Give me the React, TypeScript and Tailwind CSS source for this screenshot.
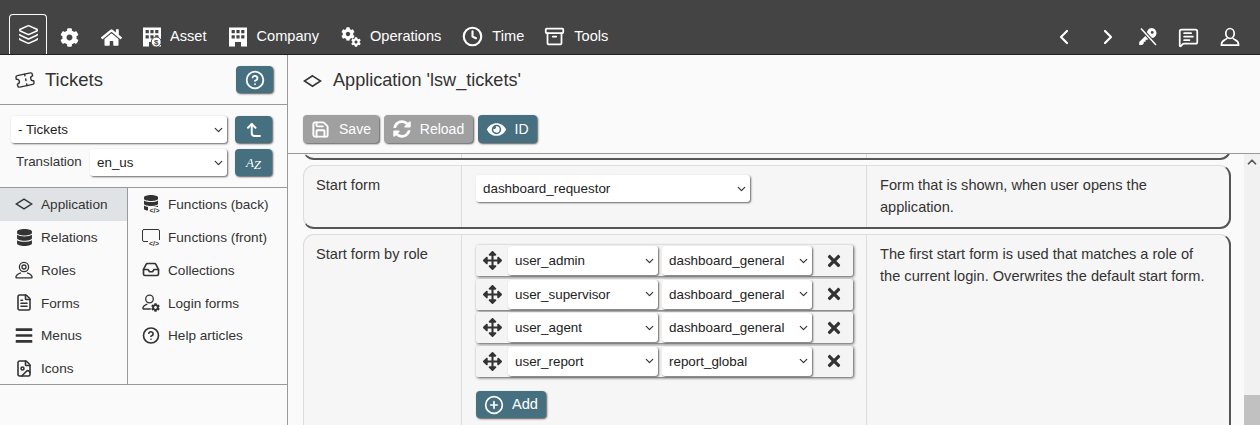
import type { ReactNode } from "react";
import {
  Archive,
  ChevronDown,
  ChevronLeft,
  ChevronRight,
  ChevronUp,
  CircleHelp,
  Clock,
  CornerLeftUp,
  FileImage,
  FileText,
  Inbox,
  Layers,
  MessageSquareText,
  CirclePlus,
  Save,
  Ticket,
} from "lucide-react";
import { FaArrowsAlt, FaBars, FaCog, FaDatabase, FaEye, FaHome, FaSyncAlt, FaTimes } from "react-icons/fa";

function Diamond({ className }: { className?: string }) {
  return (
    <svg viewBox="0 0 20 14" className={className} fill="none" stroke="currentColor" strokeWidth="1.6">
      <path d="M10 1.5 18.5 7 10 12.5 1.5 7Z" />
    </svg>
  );
}

function Building({ badge }: { badge?: boolean }) {
  return (
    <svg viewBox="0 0 18 20" className="h-[20px] w-[18px]" fill="currentColor">
      <path
        fillRule="evenodd"
        d="M0 .5h18v19h-6v-4.5H6v4.5H0ZM2.6 3v3.2h3.2V3Zm4.8 0v3.2h3.2V3Zm4.8 0v3.2h3.2V3ZM2.6 8.2v3.2h3.2V8.2Zm4.8 0v3.2h3.2V8.2Zm4.8 0v3.2h3.2V8.2Z"
      />
      {badge && (
        <>
          <circle cx="13.2" cy="15" r="5" stroke="#444" strokeWidth="1" />
          <text x="13.2" y="18" fontSize="8" textAnchor="middle" fill="#444" fontWeight="700">
            $
          </text>
        </>
      )}
    </svg>
  );
}

function TwoGears() {
  return (
    <span className="relative block h-[20px] w-[20px]">
      <FaCog size={14} className="absolute left-0 top-0" />
      <FaCog size={10} className="absolute bottom-0 right-0" />
    </span>
  );
}

function KeyOff() {
  return (
    <svg viewBox="0 0 20 20" className="mr-[-1px] h-[20px] w-[20px]" fill="currentColor">
      <path d="M13.5 1a5 5 0 0 1 3.6 8.4 5 5 0 0 1-5.4 1.2L9.5 12.8H7.6v1.9H5.7v1.9l-1.5 1.5H1.2v-3l7.9-7.9a5 5 0 0 1 4.4-6.2Z" />
      <circle cx="14.2" cy="5.4" r="1.4" fill="#444" />
      <path d="M3 1.5 18 18" stroke="#444" strokeWidth="3.6" />
      <path d="M3 1.5 18 18" stroke="currentColor" strokeWidth="1.5" />
    </svg>
  );
}

function UserBust() {
  return (
    <svg viewBox="0 0 20 20" className="h-[20px] w-[20px]" fill="none" stroke="currentColor" strokeWidth="1.7">
      <ellipse cx="10" cy="6.5" rx="4.2" ry="5" />
      <path d="M7 11c-.2 2-5.5 2-5.5 6.2v1h17v-1c0-4.2-5.3-4.2-5.5-6.2" />
    </svg>
  );
}

function CodeDb() {
  return (
    <span className="relative block h-[18px] w-[17px]">
      <FaDatabase size={16} className="absolute left-0 top-0" />
      <span className="absolute -bottom-[2px] right-[-1px] bg-[#fafafa] px-px text-[7px] font-bold leading-[8px]">
        {"</>"}
      </span>
    </span>
  );
}

function CodeScreen() {
  return (
    <span className="relative block h-[17px] w-[18px]">
      <span className="absolute left-0 top-0 h-[13px] w-[18px] rounded-[2px] border-[1.5px] border-[#333]" />
      <span className="absolute -bottom-[2px] right-0 bg-[#fafafa] px-px text-[7px] font-bold leading-[8px]">
        {"</>"}
      </span>
    </span>
  );
}

function RoleIcon() {
  return (
    <svg viewBox="0 0 18 18" className="h-[18px] w-[18px]" fill="none" stroke="currentColor" strokeWidth="1.3">
      <circle cx="9" cy="6" r="4.6" />
      <circle cx="9" cy="6" r="2" />
      <path d="M.8 16.8c0-3 2.7-4.2 5.2-4.9M17.2 16.8c0-3-2.7-4.2-5.2-4.9M.8 16.8h16.4" />
    </svg>
  );
}

function LoginForm() {
  return (
    <span className="relative block h-[18px] w-[18px]">
      <svg viewBox="0 0 18 18" className="h-[18px] w-[18px]" fill="none" stroke="currentColor" strokeWidth="1.3">
        <circle cx="7.5" cy="5" r="3.8" />
        <path d="M.8 15c0-3 2.6-4.2 4.6-4.8M.8 15h8" />
      </svg>
      <FaCog size={9} className="absolute bottom-0 right-0" />
    </span>
  );
}

function TopItem({ icon, label, className }: { icon: ReactNode; label?: string; className?: string }) {
  return (
    <div className={`flex items-center ${className ?? ""}`}>
      {icon}
      {label && <span>{label}</span>}
    </div>
  );
}

function TopBar() {
  return (
    <div className="flex h-[55px] shrink-0 items-end border-b border-[#222] bg-[#444444] pl-[9px] pr-[20px] text-[14.6px] text-white">
      <div className="flex h-[40px] w-[38px] items-center justify-center rounded-t-[4px] border-x-[1.5px] border-t-[1.5px] border-white">
        <Layers size={21} strokeWidth={1.8} />
      </div>
      <div className="flex h-[34px] flex-1 items-center pl-[13px]">
        <TopItem icon={<FaCog size={19} />} className="mr-[22px]" />
        <TopItem icon={<FaHome size={21} />} className="mr-[21px]" />
        <TopItem icon={<Building badge />} label="Asset" className="mr-[22px] gap-[9px]" />
        <TopItem icon={<Building />} label="Company" className="mr-[22px] gap-[10px]" />
        <TopItem icon={<TwoGears />} label="Operations" className="mr-[21px] gap-[9px]" />
        <TopItem icon={<Clock size={21} strokeWidth={2.4} />} label="Time" className="mr-[20px] gap-[9px]" />
        <TopItem icon={<Archive size={21} strokeWidth={2} />} label="Tools" className="gap-[9px]" />
        <div className="ml-auto flex items-center gap-[21px]">
          <ChevronLeft size={24} strokeWidth={2.2} className="mr-[-1px]" />
          <ChevronRight size={24} strokeWidth={2.2} className="mr-[-3px]" />
          <KeyOff />
          <MessageSquareText size={21} strokeWidth={2} />
          <UserBust />
        </div>
      </div>
    </div>
  );
}

function Select({ value, className }: { value: string; className?: string }) {
  return (
    <span className={`relative block ${className ?? ""}`}>
      <select
        defaultValue={value}
        className="h-full w-full appearance-none rounded-[3px] bg-white pl-[7px] pt-[2px] text-[13.4px] text-[#222] shadow-[1px_1px_2px_#666] outline-none"
      >
        <option>{value}</option>
      </select>
      <ChevronDown size={13} strokeWidth={2.2} className="pointer-events-none absolute right-[2px] top-1/2 -translate-y-1/2 text-[#333]" />
    </span>
  );
}

function TealButton({ children, className }: { children: ReactNode; className?: string }) {
  return (
    <button
      className={`flex items-center justify-center rounded-[4px] bg-[#46707f] text-white shadow-[1px_1px_2px_#555] ${className ?? ""}`}
    >
      {children}
    </button>
  );
}

function SideItem({ icon, label, active }: { icon: ReactNode; label: string; active?: boolean }) {
  return (
    <div className={`flex h-[32.8px] items-center gap-[8px] pl-[15px] ${active ? "bg-[#dfe3e5]" : ""}`}>
      <span className="flex w-[18px] justify-center">{icon}</span>
      <span className="pt-[2px]">{label}</span>
    </div>
  );
}

function Sidebar() {
  return (
    <div className="flex w-[288px] shrink-0 flex-col border-r border-[#999] bg-[#fafafa] text-[#333]">
      <div className="flex h-[50px] shrink-0 items-center border-b border-[#999] pl-[15px] pr-[14px]">
        <Ticket size={20} strokeWidth={1.7} className="-rotate-12" />
        <span className="ml-[10px] text-[18.5px]">Tickets</span>
        <TealButton className="ml-auto h-[27px] w-[37px]">
          <CircleHelp size={20} strokeWidth={2.2} />
        </TealButton>
      </div>
      <div className="flex h-[83px] shrink-0 flex-col gap-[6px] border-b border-[#999] pl-[11px] pr-[15px] pt-[11px]">
        <div className="flex gap-[8px]">
          <Select value="- Tickets" className="h-[27px] flex-1" />
          <TealButton className="h-[27px] w-[37px]">
            <CornerLeftUp size={18} strokeWidth={2.6} />
          </TealButton>
        </div>
        <div className="flex items-center gap-[8px]">
          <span className="w-[71px] whitespace-nowrap pl-[5px] text-[13.4px]">Translation</span>
          <Select value="en_us" className="h-[27px] flex-1" />
          <TealButton className="h-[27px] w-[37px] font-['Liberation_Serif',serif] text-[13px] italic">
            A<span className="translate-y-[2px]">Z</span>
          </TealButton>
        </div>
      </div>
      <div className="grid h-[197px] shrink-0 grid-cols-[128px_1fr] border-b border-[#999] text-[13.6px]">
        <div className="border-r border-[#999]">
          <SideItem active icon={<Diamond className="h-[14px] w-[18px]" />} label="Application" />
          <SideItem icon={<FaDatabase size={17} />} label="Relations" />
          <SideItem icon={<RoleIcon />} label="Roles" />
          <SideItem icon={<FileText size={19} strokeWidth={2.1} />} label="Forms" />
          <SideItem icon={<FaBars size={19} />} label="Menus" />
          <SideItem icon={<FileImage size={19} strokeWidth={2.1} />} label="Icons" />
        </div>
        <div className="-ml-px">
          <SideItem icon={<CodeDb />} label="Functions (back)" />
          <SideItem icon={<CodeScreen />} label="Functions (front)" />
          <SideItem icon={<Inbox size={19} strokeWidth={2.2} />} label="Collections" />
          <SideItem icon={<LoginForm />} label="Login forms" />
          <SideItem icon={<CircleHelp size={19} strokeWidth={2.2} />} label="Help articles" />
        </div>
      </div>
    </div>
  );
}

function Card({ label, note, children, className }: { label?: string; note?: ReactNode; children?: ReactNode; className?: string }) {
  return (
    <div
      className={`grid grid-cols-[158px_405px_1fr] rounded-[11px] border-b-2 border-r-2 border-l border-t border-b-[#555] border-l-[#ddd] border-r-[#555] border-t-[#ddd] bg-[#f6f6f6] text-[14.6px] text-[#333] ${className ?? ""}`}
    >
      <div className="border-r border-[#ddd] pl-[12px] pt-[9px]">{label}</div>
      <div className="border-r border-[#ddd] pl-[14px] pr-[13px] pt-[10px]">{children}</div>
      <div className="pl-[13px] pr-[16px] pt-[9px] leading-[21.7px]">{note}</div>
    </div>
  );
}

const roleRows = [
  ["user_admin", "dashboard_general"],
  ["user_supervisor", "dashboard_general"],
  ["user_agent", "dashboard_general"],
  ["user_report", "report_global"],
];

function RoleRow({ role, form }: { role: string; form: string }) {
  return (
    <div className="flex h-[31px] items-center rounded-[2px] bg-[#f4f4f4] shadow-[1px_1px_3px_#555]">
      <span className="flex w-[32px] justify-center text-[#333]">
        <FaArrowsAlt size={19} />
      </span>
      <Select value={role} className="h-[29px] w-[150px]" />
      <Select value={form} className="ml-[4px] h-[29px] w-[150px]" />
      <span className="flex flex-1 justify-center pl-[3px] text-[#333]">
        <FaTimes size={18} />
      </span>
    </div>
  );
}

function MainPanel() {
  return (
    <div className="flex min-w-0 flex-1 flex-col bg-[#fafafa]">
      <div className="flex h-[50px] shrink-0 items-center gap-[11px] pl-[15px] pt-px text-[18.1px] text-[#333]">
        <Diamond className="h-[14px] w-[19px]" />
        <span>Application 'lsw_tickets'</span>
      </div>
      <div className="flex h-[49px] shrink-0 gap-[5px] border-b border-[#999] pl-[15px] pt-[10px] text-[14px]">
        <TealButton className="h-[28px] w-[76px] gap-[9px] !bg-[#a0a0a0] text-[#eee]">
          <Save size={19} strokeWidth={2.4} /> Save
        </TealButton>
        <TealButton className="h-[28px] w-[89px] gap-[9px] !bg-[#a0a0a0] text-[#eee]">
          <FaSyncAlt size={18} /> Reload
        </TealButton>
        <TealButton className="h-[28px] w-[59px] gap-[9px]">
          <FaEye size={19} /> ID
        </TealButton>
      </div>
      <div className="flex min-h-0 flex-1">
        <div className="min-w-0 flex-1 overflow-hidden pl-[15px] pr-[13px]">
          <Card className="-mt-[40px] h-[46px]" />
          <Card
            className="mt-[5px] h-[64px]"
            label="Start form"
            note={
              <>
                Form that is shown, when user opens the
                <br />
                application.
              </>
            }
          >
            <Select value="dashboard_requestor" className="h-[27px] w-[274px] -translate-y-px" />
          </Card>
          <Card
            className="mt-[5px] h-[220px]"
            label="Start form by role"
            note={
              <>
                The first start form is used that matches a role of
                <br />
                the current login. Overwrites the default start form.
              </>
            }
          >
            <div className="flex flex-col gap-[2.5px]">
              {roleRows.map(([role, form]) => (
                <RoleRow key={role} role={role} form={form} />
              ))}
            </div>
            <TealButton className="mt-[14px] h-[27px] w-[70px] gap-[8px] pt-px">
              <CirclePlus size={20} strokeWidth={2} /> Add
            </TealButton>
          </Card>
        </div>
        <div className="flex w-[16px] shrink-0 flex-col justify-between bg-[#f1f1f1]">
          <ChevronUp size={14} strokeWidth={3} className="ml-px mt-px text-[#555]" />
          <div className="h-[30px] bg-[#c1c1c1]" />
        </div>
      </div>
    </div>
  );
}

export default function App() {
  return (
    <div className="flex h-[425px] w-[1260px] flex-col overflow-hidden font-['Liberation_Sans',Arial,sans-serif]">
      <TopBar />
      <div className="flex min-h-0 flex-1">
        <Sidebar />
        <MainPanel />
      </div>
    </div>
  );
}
